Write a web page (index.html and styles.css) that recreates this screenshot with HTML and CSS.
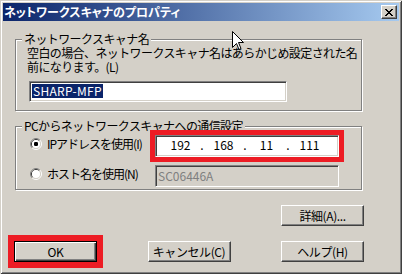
FILE: index.html
```html
<!DOCTYPE html>
<html lang="ja">
<head>
<meta charset="utf-8">
<link rel="stylesheet" href="styles.css">
</head>
<body>
<div class="window">
  <div class="titlebar">
    <span class="title">ネットワークスキャナのプロパティ</span>
    <button class="close" aria-label="閉じる">
      <svg width="8" height="7" viewBox="0 0 8 7"><path fill="#000" d="M0 0h2v1H0zM6 0h2v1H6zM1 1h2v1H1zM5 1h2v1H5zM2 2h4v1H2zM3 3h2v1H3zM2 4h4v1H2zM1 5h2v1H1zM5 5h2v1H5zM0 6h2v1H0zM6 6h2v1H6z"/></svg>
    </button>
  </div>
  <div class="content">
    <div class="group g1">
      <div class="legend">ネットワークスキャナ名</div>
      <p class="desc">空白の場合、ネットワークスキャナ名はあらかじめ設定された名<br>前になります。(L)</p>
      <div class="edit name"><span class="sel">SHARP-MFP</span></div>
    </div>
    <div class="group g2">
      <div class="legend">PCからネットワークスキャナへの通信設定</div>
      <div class="opts">
        <div class="radio">
          <svg class="rb" width="12" height="12" viewBox="0 0 12 12">
            <path d="M2.11 9.89A5.5 5.5 0 0 1 9.89 2.11" fill="none" stroke="#808080"/>
            <path d="M9.89 2.11A5.5 5.5 0 0 1 2.11 9.89" fill="none" stroke="#fff"/>
            <path d="M2.82 9.18A4.5 4.5 0 0 1 9.18 2.82" fill="none" stroke="#404040"/>
            <path d="M9.18 2.82A4.5 4.5 0 0 1 2.82 9.18" fill="none" stroke="#d4d0c8"/>
            <circle cx="6" cy="6" r="4" fill="#fff"/>
            <rect x="4" y="4" width="4" height="4" rx="1.2" fill="#000"/>
          </svg>
          <span>IPアドレスを使用(I)</span>
        </div>
        <div class="edit ip marked">
          <span class="oct">192</span><span class="dot">.</span><span class="oct">168</span><span class="dot">.</span><span class="oct">11</span><span class="dot">.</span><span class="oct">111</span>
        </div>
        <div class="radio">
          <svg class="rb" width="12" height="12" viewBox="0 0 12 12">
            <path d="M2.11 9.89A5.5 5.5 0 0 1 9.89 2.11" fill="none" stroke="#808080"/>
            <path d="M9.89 2.11A5.5 5.5 0 0 1 2.11 9.89" fill="none" stroke="#fff"/>
            <path d="M2.82 9.18A4.5 4.5 0 0 1 9.18 2.82" fill="none" stroke="#404040"/>
            <path d="M9.18 2.82A4.5 4.5 0 0 1 2.82 9.18" fill="none" stroke="#d4d0c8"/>
            <circle cx="6" cy="6" r="4" fill="#fff"/>
          </svg>
          <span>ホスト名を使用(N)</span>
        </div>
        <div class="edit host">SC06446A</div>
      </div>
    </div>
    <div class="row detail"><button class="btn">詳細(A)...</button></div>
    <div class="row actions">
      <button class="btn default marked">OK</button>
      <button class="btn">キャンセル(C)</button>
      <button class="btn">ヘルプ(H)</button>
    </div>
  </div>
  <svg class="cursor" width="12" height="20" viewBox="0 0 12 20">
    <path d="M0.5 0.5V16.5L4.5 12.5L7 18.5L9 17.5L6.5 11.5H11.5Z" fill="#fff" stroke="#000" stroke-width="1" stroke-linejoin="miter"/>
  </svg>
</div>
</body>
</html>
```
FILE: styles.css
```css
html, body {
  margin: 0;
  padding: 0;
  background: #d4d0c8;
}
body {
  font-family: "Noto Sans CJK JP", sans-serif;
  font-size: 12px;
  font-weight: normal;
  color: #000;
}
.window {
  position: relative;
  width: 402px;
  height: 274px;
  box-sizing: border-box;
  padding: 3px;
  background: #d4d0c8;
  overflow: hidden;
  box-shadow: inset 1px 1px #d4d0c8, inset -1px -1px #404040, inset 2px 2px #fff, inset -2px -2px #808080;
}
.titlebar {
  height: 18px;
  display: flex;
  align-items: center;
  justify-content: space-between;
  padding: 0 2px 0 1px;
  background: linear-gradient(to right, #0a246a, #a6caf0);
  color: #fff;
}
.title {
  font-weight: bold;
  font-size: 12px;
  line-height: 18px;
  font-feature-settings: "palt";
}
.close {
  width: 16px;
  height: 14px;
  box-sizing: border-box;
  padding: 0;
  margin: 0;
  border: 1px solid;
  border-color: #fff #404040 #404040 #fff;
  box-shadow: inset -1px -1px #808080;
  background: #d4d0c8;
  display: flex;
  align-items: center;
  justify-content: center;
}
.close svg { display: block; margin: 0 0 0 -1px; }
.content {
  padding: 0 0 0 12px;
}
.group {
  width: 347px;
  box-sizing: border-box;
  border: 1px solid #808080;
  box-shadow: inset 1px 1px #fff, 1px 1px #fff;
}
.legend {
  width: fit-content;
  margin: -8px 0 0 -5px;
  padding: 0 2px;
  background: #d4d0c8;
  line-height: 14px;
  letter-spacing: -0.6px;
  white-space: nowrap;
}
.g1 {
  margin-top: 18px;
  height: 72px;
  padding: 0 0 0 11px;
}
.desc {
  margin: 0;
  line-height: 14px;
  letter-spacing: -0.6px;
  white-space: nowrap;
}
.edit {
  box-sizing: border-box;
  border: 1px solid;
  border-color: #808080 #fff #fff #808080;
  box-shadow: inset 1px 1px #404040, inset -1px -1px #d4d0c8;
  background: #fff;
}
.name {
  margin: 7px 0 0 2px;
  width: 258px;
  height: 21px;
  padding: 2px 0 0 2px;
  line-height: 14px;
}
.sel {
  display: inline-block;
  background: #0a246a;
  color: #fff;
  padding: 0 1px;
  line-height: 14px;
  letter-spacing: 0.3px;
}
.g2 {
  margin-top: 15px;
  height: 64px;
  padding: 0 0 0 14px;
}
.g2 .legend { margin-left: -8px; }
.opts {
  display: grid;
  grid-template-columns: 125px 184px;
  grid-auto-rows: 22px;
  row-gap: 8px;
  margin-top: 2px;
}
.radio {
  display: flex;
  align-items: center;
  gap: 5px;
  height: 14px;
  margin-top: 2px;
  line-height: 14px;
  letter-spacing: -1px;
  white-space: nowrap;
}
.rb { display: block; flex: none; }
.ip {
  display: flex;
  padding: 0 0 0 5px;
  line-height: 17px;
}
.oct {
  width: 39px;
  text-align: center;
}
.dot {
  width: 4px;
  text-align: center;
}
.host {
  background: #d4d0c8;
  color: #808080;
  padding: 0 0 0 2px;
  line-height: 19px;
}
.marked {
  outline: 6px solid #ed1c24;
}
.ip.marked { outline-width: 5px; }
.row {
  display: flex;
}
.detail {
  margin-top: 15px;
  width: 349px;
  justify-content: flex-end;
}
.actions {
  margin: 15px 0 0 -1px;
  width: 350px;
  justify-content: space-between;
}
.btn {
  width: 83px;
  height: 21px;
  box-sizing: border-box;
  margin: 0;
  padding: 0;
  font-family: inherit;
  font-size: 12px;
  font-weight: normal;
  line-height: 17px;
  color: #000;
  background: #d4d0c8;
  border: 1px solid;
  border-color: #fff #404040 #404040 #fff;
  box-shadow: inset -1px -1px #808080;
  letter-spacing: -0.4px;
}
.btn.default {
  border-color: #000;
  box-shadow: inset 1px 1px #fff, inset -1px -1px #404040, inset -2px -2px #808080;
}
.cursor {
  position: absolute;
  left: 232px;
  top: 31px;
}
```
